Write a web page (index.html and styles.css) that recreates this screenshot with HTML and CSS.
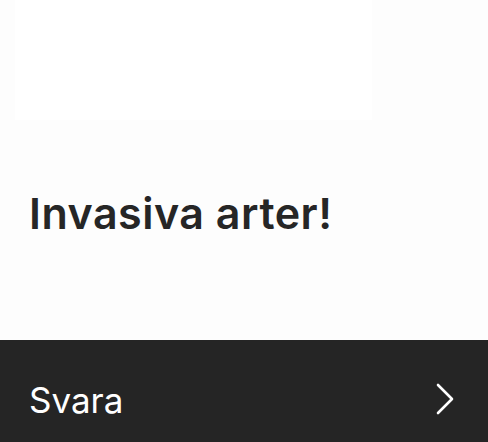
FILE: index.html
```html
<!DOCTYPE html>
<html lang="sv">
<head>
<meta charset="utf-8">
<link rel="stylesheet" href="styles.css">
</head>
<body>
<div class="page">
  <div class="media"></div>
  <h1 class="title">Invasiva arter!</h1>
  <div class="spacer"></div>
  <a class="answer" href="#">
    <span class="answer-label">Svara</span>
    <svg class="chevron" width="20" height="32" viewBox="0 0 20 32" aria-hidden="true">
      <path d="M3 2 L17 16 L3 30" fill="none" stroke="#ffffff" stroke-width="2.6" stroke-linecap="round" stroke-linejoin="round"/>
    </svg>
  </a>
</div>
</body>
</html>
```

FILE: styles.css
```css
html, body {
  margin: 0;
  padding: 0;
}
body {
  background: #fdfdfd;
  font-family: Inter, "Noto Sans", sans-serif;
  width: 488px;
  height: 442px;
  overflow: hidden;
}
.page {
  display: flex;
  flex-direction: column;
  height: 442px;
}
.media {
  margin-left: 15px;
  width: 357px;
  height: 120px;
  background: #ffffff;
  flex: none;
}
.title {
  margin: 67px 0 0 29px;
  font-size: 43px;
  font-weight: 600;
  line-height: 52px;
  color: #262626;
  letter-spacing: 0.5px;
}
.spacer {
  flex: 1;
}
.answer {
  flex: none;
  height: 102px;
  background: #252525;
  display: flex;
  align-items: center;
  justify-content: space-between;
  padding: 0 33px 0 29px;
  text-decoration: none;
}
.answer-label {
  color: #ffffff;
  font-size: 35px;
  font-weight: 400;
  padding-top: 18px;
}
.chevron {
  display: block;
  margin-top: 16px;
}
```
